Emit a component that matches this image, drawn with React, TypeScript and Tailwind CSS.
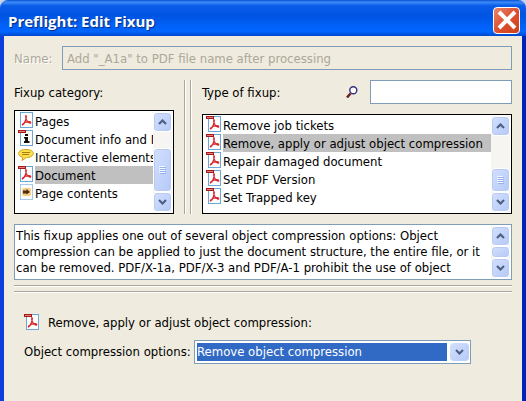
import React, { useState } from 'react';

// ==========================================
// Icons
// ==========================================
const PdfIcon = ({ tab = true }: { tab?: boolean }) => (
    <svg viewBox="0 0 16 16" className="w-4 h-4 shrink-0" aria-hidden="true">
        <rect x="2.5" y="0.5" width="12" height="15" fill="#fdfdfd" stroke="#6aa6d6" />
        <path d="M7.800 3.500c.8 0 .6 2-.1 4.200C7 10 5.800 12.300 4.500 13c-.8-.6 1.200-2.200 3.300-2.800c2.200-.6 4.700-.6 5 .4c.1 1-2.200.3-3.600-1.500C8 7.500 7.300 5 7.800 3.500z" fill="none" stroke="#d8262c" strokeWidth="1.200" />
        {tab && <path d="M0 0h8v3H0z" fill="#a81818" />}
        {tab && <path d="M1 1h6v1H1z" fill="#dc8078" />}
    </svg>
);

const PageIcon = () => <PdfIcon tab={false} />;

const InfoIcon = () => (
    <svg viewBox="0 0 16 16" className="w-4 h-4 shrink-0" aria-hidden="true">
        <rect x="2.5" y="0.5" width="12" height="15" fill="#fdfdfd" stroke="#6aa6d6" />
        <path d="M7 4h3v2H7zM6 7h4v4h1.500v2H6v-2h1V8.500H6z" fill="#111" />
        <path d="M0 0h8v3H0z" fill="#a81818" />
        <path d="M1 1h6v1H1z" fill="#dc8078" />
    </svg>
);

const CommentIcon = () => (
    <svg viewBox="0 0 16 16" className="w-4 h-4 shrink-0" aria-hidden="true">
        <path d="M8 1.500c4 0 7.300 1.400 7.300 3.900S12 9.500 8.500 9.500L4 12.500L4.800 9.200C2 8.500.6 7.400.6 5.400C.6 2.900 4 1.500 8 1.500z" fill="#fbe04c" stroke="#cda41a" />
        <path d="M4 4.500h8M4 6.500h7" stroke="#a87c10" />
    </svg>
);

const ContentsIcon = () => (
    <svg viewBox="0 0 16 16" className="w-4 h-4 shrink-0" aria-hidden="true">
        <rect x="2.5" y="0.5" width="12" height="15" fill="#fdfdfd" stroke="#a9c8e4" />
        <rect x="4" y="4" width="9" height="8" rx="2" fill="#f8cc7c" />
        <path d="M5 6.500h3.500V5L12 8l-3.500 2.500V9.500H5z" fill="#4a2c12" />
    </svg>
);

const SearchIcon = () => (
    <svg viewBox="0 0 12 12" className="w-3 h-3 shrink-0" aria-hidden="true">
        <path d="M1 11.500L4.500 7.500" stroke="#6b1f22" strokeWidth="2.500" />
        <circle cx="7.300" cy="4.300" r="3.500" fill="#fff" stroke="#35307f" strokeWidth="1.400" />
    </svg>
);

const Chevron = ({ up = false }: { up?: boolean }) => (
    <svg viewBox="0 0 9 6" className="w-[9px] h-[6px]" aria-hidden="true">
        <path d={up ? 'M1 5L4.500 1.500L8 5' : 'M1 1L4.500 4.500L8 1'} fill="none" stroke="#4d6185" strokeWidth="2.200" />
    </svg>
);

// ==========================================
// Scroll bar
// ==========================================
const scrollPart = 'w-full flex items-center justify-center shrink-0 rounded-sm border border-white bg-gradient-to-br from-[#d3e0fd] to-[#b5c9f8] ring-1 ring-inset ring-[#b9cbf3]';

interface ScrollBarProps {
    thumb: string;
    grip?: boolean;
}

const ScrollBar = ({ thumb, grip = true }: ScrollBarProps) => (
    <div className="w-[19px] shrink-0 flex flex-col bg-[#f6f5f1]">
        <button type="button" aria-label="Scroll up" className={`${scrollPart} h-5`}>
            <Chevron up />
        </button>
        <div className="flex-1 flex flex-col justify-end">
            <div className={`${scrollPart} ${thumb}`}>
                {grip && (
                    <svg viewBox="0 0 7 8" className="w-[7px] h-2" aria-hidden="true">
                        <path d="M0 .5h6M0 2.500h6M0 4.500h6M0 6.500h6" stroke="#f2f6ff" />
                        <path d="M1 1.500h6M1 3.500h6M1 5.500h6M1 7.500h6" stroke="#97b0ee" />
                    </svg>
                )}
            </div>
        </div>
        <button type="button" aria-label="Scroll down" className={`${scrollPart} h-5`}>
            <Chevron />
        </button>
    </div>
);

// ==========================================
// List box
// ==========================================
interface Item {
    label: string;
    icon: React.ElementType;
}

interface ListBoxProps {
    items: Item[];
    selected: string;
    onSelect: (label: string) => void;
    thumb: string;
    labelledBy: string;
}

const ListBox = ({ items, selected, onSelect, thumb, labelledBy }: ListBoxProps) => (
    <div className="flex-1 flex border border-black bg-white p-px">
        <ul aria-labelledby={labelledBy} className="flex-1 min-w-0 pl-0.5">
            {items.map(({ label, icon: Icon }) => (
                <li key={label}>
                    <button
                        type="button"
                        aria-pressed={label === selected}
                        onClick={() => onSelect(label)}
                        className="w-full h-[18px] flex items-start gap-px text-left"
                    >
                        <Icon />
                        <span className={`flex-1 min-w-0 h-[18px] overflow-hidden whitespace-nowrap leading-5 ${label === selected ? 'bg-[#c1c0c0]' : ''}`}>
                            {label}
                        </span>
                    </button>
                </li>
            ))}
        </ul>
        <ScrollBar thumb={thumb} />
    </div>
);

const categories: Item[] = [
    { label: 'Pages', icon: PageIcon },
    { label: 'Document info and Metadata', icon: InfoIcon },
    { label: 'Interactive elements', icon: CommentIcon },
    { label: 'Document', icon: PdfIcon },
    { label: 'Page contents', icon: ContentsIcon },
];

const fixups: Item[] = [
    { label: 'Remove job tickets', icon: PdfIcon },
    { label: 'Remove, apply or adjust object compression', icon: PdfIcon },
    { label: 'Repair damaged document', icon: PdfIcon },
    { label: 'Set PDF Version', icon: PdfIcon },
    { label: 'Set Trapped key', icon: PdfIcon },
];

const description =
    'This fixup applies one out of several object compression options: Object compression can be applied to just the document structure, the entire file, or it can be removed. PDF/X-1a, PDF/X-3 and PDF/A-1 prohibit the use of object';

export default function App() {
    const [category, setCategory] = useState('Document');
    const [fixup, setFixup] = useState('Remove, apply or adjust object compression');

    return (
        <div className="min-h-screen flex flex-col bg-[#c9d3ea] font-['DejaVu_Sans_Condensed','DejaVu_Sans',sans-serif] text-[13px] leading-4 text-black">
            {/* Title bar */}
            <header className="h-9 shrink-0 flex items-center justify-between pl-2 pr-1.5 pt-1 rounded-t-lg bg-[linear-gradient(to_bottom,#0a4fd0_0%,#3c8cf8_6%,#0a5ce8_16%,#0054e3_45%,#0062fb_75%,#0066ff_88%,#0046cc_100%)]">
                <h1 className="pt-0.5 font-['Open_Sans','Noto_Sans',sans-serif] font-bold text-[15px] leading-5 text-white [text-shadow:1px_1px_1px_#0a2a80]">
                    Preflight: Edit Fixup
                </h1>
                <button
                    type="button"
                    aria-label="Close"
                    className="w-[27px] h-[27px] flex items-center justify-center rounded border border-white bg-gradient-to-br from-[#e8836a] via-[#dd5030] to-[#cc4218]"
                >
                    <svg viewBox="0 0 20 20" className="w-5 h-5" aria-hidden="true">
                        <path d="M2 2L18 18M18 2L2 18" stroke="#fff" strokeWidth="4" />
                    </svg>
                </button>
            </header>

            {/* Window body */}
            <main className="flex-1 flex flex-col border-x-4 border-[#0a3fdc] border-r-[#0024b8] bg-[#efebde] px-2.5 pt-2.5">
                <div className="flex items-center">
                    <label htmlFor="name" className="w-12 pt-0.5 text-[#aca899] [text-shadow:1px_1px_0_#fff]">Name:</label>
                    <input
                        id="name"
                        disabled
                        defaultValue={'Add "_A1a" to PDF file name after processing'}
                        className="flex-1 min-w-0 h-6 px-1 border border-[#7f9db9] text-[#aca899]"
                    />
                </div>

                <div className="mt-2.5 flex">
                    <section className="w-40 h-[134px] flex flex-col">
                        <h2 id="category-label" className="h-[30px] pt-[5px]">Fixup category:</h2>
                        <ListBox items={categories} selected={category} onSelect={setCategory} thumb="h-11" labelledBy="category-label" />
                    </section>

                    <div className="mx-2.5 w-2 flex justify-between">
                        <div className="w-0.5 border-l border-l-[#aca899] bg-white" />
                        <div className="w-0.5 border-l border-l-[#aca899] bg-white" />
                    </div>

                    <section className="flex-1 min-w-0 h-[134px] flex flex-col">
                        <div className="h-[34px] flex items-start">
                            <h2 id="type-label" className="flex-1 pt-[5px]">Type of fixup:</h2>
                            <label htmlFor="search" aria-label="Search" className="pt-1.5 pr-3">
                                <SearchIcon />
                            </label>
                            <input id="search" type="text" className="w-[142px] h-6 px-1 border border-[#7f9db9] bg-white" />
                        </div>
                        <ListBox items={fixups} selected={fixup} onSelect={setFixup} thumb="h-6" labelledBy="type-label" />
                    </section>
                </div>

                <div className="mt-2.5 h-14 flex border border-[#7f9db9] bg-white p-px">
                    <textarea
                        readOnly
                        aria-label="Fixup description"
                        defaultValue={description}
                        className="flex-1 min-w-0 resize-none overflow-hidden pt-0.5"
                    />
                    <ScrollBar thumb="h-3" grip={false} />
                </div>

                <hr className="mt-[5px] h-0.5 border-t border-[#aca899] bg-white" />
                <hr className="mt-1 h-0.5 border-t border-[#aca899] bg-white" />

                <div className="mt-5 ml-2.5 flex items-center gap-2">
                    <PdfIcon />
                    <h2 className="pt-0.5">Remove, apply or adjust object compression:</h2>
                </div>

                <div className="mt-[9px] ml-2.5 mr-[41px] flex items-center">
                    <label htmlFor="compression" className="w-[170px] whitespace-nowrap">Object compression options:</label>
                    <div className="flex-1 min-w-0 h-6 flex gap-[3px] border border-[#7f9db9] bg-white p-0.5 pr-px">
                        <select
                            id="compression"
                            defaultValue="remove"
                            className="flex-1 min-w-0 appearance-none bg-[#316ac5] text-white"
                        >
                            <option value="remove">Remove object compression</option>
                        </select>
                        <span className="w-[19px] flex items-center justify-center rounded-sm bg-gradient-to-br from-[#d3e0fd] to-[#b5c9f8] pointer-events-none">
                            <Chevron />
                        </span>
                    </div>
                </div>
            </main>
        </div>
    );
}
